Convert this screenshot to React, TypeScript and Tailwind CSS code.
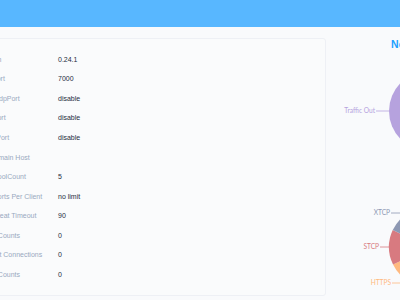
const rows = [
  ["Version", "0.24.1"],
  ["BindPort", "7000"],
  ["Bind UdpPort", "disable"],
  ["Http Port", "disable"],
  ["Https Port", "disable"],
  ["Subdomain Host", ""],
  ["Max PoolCount", "5"],
  ["Max Ports Per Client", "no limit"],
  ["HeartBeat Timeout", "90"],
  ["Client Counts", "0"],
  ["Current Connections", "0"],
  ["Proxy Counts", "0"],
];

const pt = (cx: number, cy: number, r: number, a: number) => {
  const rad = (a * Math.PI) / 180;
  return [cx + r * Math.sin(rad), cy - r * Math.cos(rad)];
};

const slice = (cx: number, cy: number, r: number, a0: number, a1: number) => {
  const [x0, y0] = pt(cx, cy, r, a0);
  const [x1, y1] = pt(cx, cy, r, a1);
  const large = a1 - a0 > 180 ? 1 : 0;
  return `M${cx},${cy} L${x0},${y0} A${r},${r} 0 ${large},1 ${x1},${y1} Z`;
};

const TrafficPie = () => (
  <svg width="206" height="120" className="block">
    <path d={slice(103, 60, 40, 0, 180)} fill="#2ec7c9" />
    <path d={slice(103, 60, 40, 180, 360)} fill="#b6a2de" />
    <line x1="50" y1="60" x2="63" y2="60" stroke="#b6a2de" strokeWidth="0.8" />
    <text x="49" y="62.3" textAnchor="end" fontSize="6.6" fill="#b6a2de" fontFamily="Lato, sans-serif">
      Traffic Out
    </text>
  </svg>
);

const ProxyPie = () => (
  <svg width="206" height="130" className="block">
    <path d={slice(103, 76, 40, 0, 60)} fill="#2ec7c9" />
    <path d={slice(103, 76, 40, 60, 120)} fill="#b6a2de" />
    <path d={slice(103, 76, 40, 120, 168)} fill="#5ab1ef" />
    <path d={slice(103, 76, 40, 168, 244)} fill="#ffb980" />
    <path d={slice(103, 76, 40, 244, 295)} fill="#d87a80" />
    <path d={slice(103, 76, 40, 295, 360)} fill="#8d98b3" />
    <polyline points="65,42 78,42 83,44" fill="none" stroke="#8d98b3" strokeWidth="0.8" />
    <text x="64" y="44.3" textAnchor="end" fontSize="6.6" fill="#8d98b3" fontFamily="Lato, sans-serif">
      XTCP
    </text>
    <line x1="54" y1="76" x2="63" y2="76" stroke="#d87a80" strokeWidth="0.8" />
    <text x="53" y="78.3" textAnchor="end" fontSize="6.6" fill="#d87a80" fontFamily="Lato, sans-serif">
      STCP
    </text>
    <polyline points="66,112 80,112 86,110" fill="none" stroke="#ffb980" strokeWidth="0.8" />
    <text x="65" y="114.3" textAnchor="end" fontSize="6.6" fill="#ffb980" fontFamily="Lato, sans-serif">
      HTTPS
    </text>
  </svg>
);

export default function App() {
  return (
    <div className="w-[400px] h-[300px] overflow-hidden bg-[#f9fafc] font-['Liberation_Sans',Arial,sans-serif]">
      <div className="h-[27px] bg-[#58b7ff]" />
      <div className="flex pt-[11px]">
        <div className="-ml-[34px] w-[360px] h-[258px] shrink-0 rounded-[3px] border border-[#eef0f5] bg-[#fafbfc] px-[11px] pt-[11px]">
          {rows.map(([label, value]) => (
            <div key={label} className="flex h-[19.6px] items-center text-[7px]">
              <span className="w-[80px] shrink-0 text-[#99a9bf]">{label}</span>
              <span className="text-[#1f2d3d]">{value}</span>
            </div>
          ))}
        </div>
        <div className="flex w-[206px] shrink-0 flex-col items-center">
          <div className="h-[13px] text-[10.5px] leading-[13px] font-bold text-[#20a0ff] whitespace-nowrap">
            Network Traffic
          </div>
          <TrafficPie />
          <ProxyPie />
        </div>
      </div>
    </div>
  );
}
